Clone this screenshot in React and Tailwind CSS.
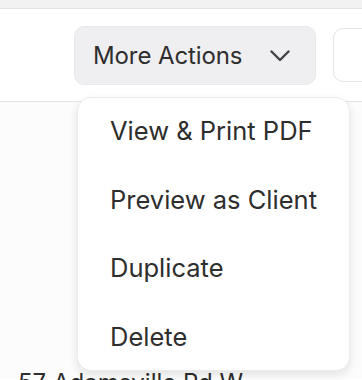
import React from "react";

export default function App() {
  return (
    <div
      className="relative w-[362px] h-[380px] overflow-hidden bg-white text-[#2e2e2e]"
      style={{ fontFamily: "Inter, 'Noto Sans', sans-serif" }}
    >
      <div className="h-[9px] bg-[#f2f2f3] border-b border-[#e4e4e6]" />
      <div className="h-[93px] border-b border-[#e6e6e8] flex items-start">
        <button className="shrink-0 ml-[74px] mt-[17px] w-[242px] h-[59px] rounded-[10px] bg-[#efeff1] border border-[#e9e9eb] flex items-center pl-[18px] pr-[25px] justify-between">
          <span className="text-[24px] leading-none tracking-[-0.1px]">More Actions</span>
          <svg width="20" height="12" viewBox="0 0 20 12" fill="none">
            <path d="M1.5 1.5 L10 10 L18.5 1.5" stroke="#444" strokeWidth="2.4" strokeLinecap="round" strokeLinejoin="round" />
          </svg>
        </button>
        <div className="shrink-0 ml-[17px] mt-[19px] w-[60px] h-[54px] rounded-[10px] border border-[#e4e4e6] bg-white" />
      </div>
      <div className="bg-[#fcfcfc] h-[277px] flex flex-col justify-end">
        <div className="pl-[18px] text-[24px] leading-none translate-y-[16px]">57 Adamsville Rd W</div>
      </div>
      <div className="absolute left-[77px] top-[97px] w-[273px] h-[274px] rounded-[14px] bg-white border border-[#ececee] shadow-[0_4px_10px_rgba(0,0,0,0.10)] flex flex-col">
        {["View & Print PDF", "Preview as Client", "Duplicate", "Delete"].map((t) => (
          <div key={t} className="shrink-0 h-[68.5px] pl-[32px] pt-[20px] text-[25.5px] leading-none">
            {t}
          </div>
        ))}
      </div>
    </div>
  );
}
